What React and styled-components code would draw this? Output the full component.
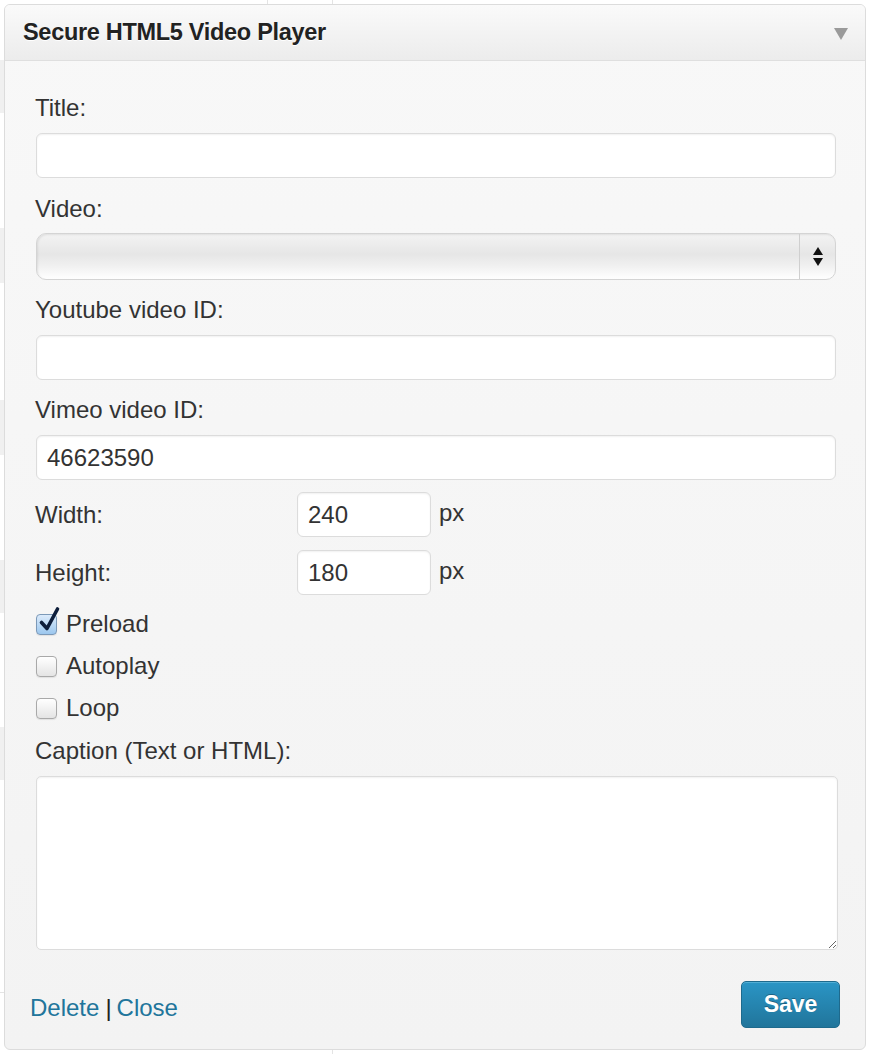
import React from "react";
import styled, { createGlobalStyle } from "styled-components";

const GlobalStyle = createGlobalStyle`
  html, body {
    margin: 0;
    padding: 0;
    background: #fff;
  }
  body {
    font-family: "Liberation Sans", Arial, Helvetica, sans-serif;
    color: #333;
  }
  * { box-sizing: border-box; }
`;

const Page = styled.div`
  width: 870px;
  height: 1054px;
  padding: 4px 4px 4px 4px;
  background-color: #fff;
  background-image:
    linear-gradient(#e4e4e4, #e4e4e4),
    linear-gradient(#e4e4e4, #e4e4e4),
    linear-gradient(#e4e4e4, #e4e4e4),
    linear-gradient(#f0f0f0, #f0f0f0),
    linear-gradient(#f0f0f0, #f0f0f0),
    linear-gradient(#f0f0f0, #f0f0f0),
    linear-gradient(#f0f0f0, #f0f0f0),
    linear-gradient(#f0f0f0, #f0f0f0),
    linear-gradient(#e4e4e4, #e4e4e4);
  background-repeat: no-repeat;
  background-size:
    1px 4px, 1px 4px, 1px 4px,
    4px 53px, 4px 55px, 4px 55px, 4px 53px, 4px 53px,
    4px 1px;
  background-position:
    267px 0, 332px 0, 332px 1050px,
    0 60px, 0 228px, 0 400px, 0 560px, 0 727px,
    0 992px;
`;

const Panel = styled.section`
  width: 862px;
  height: 1046px;
  border: 1px solid #dcdcdc;
  border-radius: 6px;
  background: linear-gradient(#f8f8f8, #f3f3f3);
  display: flex;
  flex-direction: column;
  overflow: hidden;
`;

const Header = styled.header`
  height: 56px;
  flex-shrink: 0;
  display: flex;
  align-items: center;
  justify-content: space-between;
  padding: 0 17px 0 18px;
  background: linear-gradient(#fafafa, #ececec);
  border-bottom: 1px solid #dfdfdf;
`;

const Title = styled.h3`
  margin: 0;
  font-size: 23.5px;
  font-weight: bold;
  color: #222;
  letter-spacing: -0.3px;
  text-shadow: 0 1px 0 #fff;
`;

const Toggle = styled.span`
  width: 0;
  height: 0;
  border-left: 7px solid transparent;
  border-right: 7px solid transparent;
  border-top: 12px solid #9a9a9a;
  margin-top: 2px;
`;

const Body = styled.div`
  flex: 1;
  display: flex;
  flex-direction: column;
  padding: 32px 29px 0 31px;
`;

const Label = styled.label`
  display: block;
  font-size: 24px;
  line-height: 29px;
  color: #333;
  margin: 0 0 ${(p) => (p.$gap != null ? p.$gap : 11)}px -1px;
`;

const CaptionLabel = styled(Label)`
  margin-top: 7px;
`;

const TextInput = styled.input`
  display: block;
  width: 100%;
  height: 45px;
  margin-bottom: ${(p) => (p.$after != null ? p.$after : 16)}px;
  padding: 0 10px;
  border: 1px solid #dcdcdc;
  border-radius: 6px;
  background: #fff;
  box-shadow: inset 0 1px 2px rgba(0, 0, 0, 0.06);
  font-family: inherit;
  font-size: 24px;
  color: #333;
  outline: none;
`;

const SelectBox = styled.div`
  height: 47px;
  margin-bottom: 15px;
  border: 1px solid #d4d4d4;
  border-radius: 10px;
  background: linear-gradient(#f3f3f3 0%, #e6e6e6 45%, #f0f0f0 70%, #ffffff 100%);
  box-shadow: inset 1px 1px 2px rgba(0, 0, 0, 0.08);
  display: flex;
  justify-content: flex-end;
`;

const SelectArrows = styled.div`
  width: 36px;
  border-left: 1px solid #cfcfcf;
  display: flex;
  flex-direction: column;
  align-items: center;
  justify-content: center;
  gap: 3px;
`;

const Tri = styled.span`
  width: 0;
  height: 0;
  border-left: 5px solid transparent;
  border-right: 5px solid transparent;
  ${(p) =>
    p.$up ? "border-bottom: 8px solid #111;" : "border-top: 8px solid #111;"}
`;

const SizeRow = styled.div`
  display: grid;
  grid-template-columns: 261px 134px auto;
  align-items: center;
  margin-bottom: ${(p) => p.$after}px;
`;

const SizeLabel = styled.span`
  font-size: 24px;
  margin-left: -1px;
  color: #333;
`;

const Unit = styled.span`
  font-size: 24px;
  color: #333;
  margin-left: 8px;
  margin-top: -4px;
`;

const CheckRow = styled.label`
  display: flex;
  align-items: center;
  height: 42px;
  gap: 9px;
  font-size: 24px;
  color: #333;
`;

const Box = styled.span`
  position: relative;
  width: 21px;
  height: 21px;
  flex-shrink: 0;
  border: 1px solid ${(p) => (p.$checked ? "#7c99b8" : "#a9a9a9")};
  border-radius: 4px;
  background: ${(p) =>
    p.$checked
      ? "linear-gradient(#dcebfb, #9cc7ee)"
      : "linear-gradient(#ffffff, #e4e4e4)"};
  box-shadow: 0 1px 1px rgba(0, 0, 0, 0.08);
`;

const Tick = styled.svg`
  position: absolute;
  left: 1px;
  top: -9px;
  width: 23px;
  height: 27px;
`;

const TextArea = styled.textarea`
  display: block;
  width: calc(100% + 2px);
  height: 174px;
  margin: 0;
  border: 1px solid #dcdcdc;
  border-radius: 5px;
  background: #fff;
  box-shadow: inset 0 1px 2px rgba(0, 0, 0, 0.06);
  font-family: inherit;
  font-size: 22px;
  outline: none;
`;

const Footer = styled.footer`
  display: flex;
  align-items: center;
  justify-content: space-between;
  padding: 0 25px 21px 25px;
`;

const Links = styled.div`
  font-size: 24px;
  margin-top: 7px;
  color: #333;
`;

const Link = styled.a`
  color: #21759b;
  text-decoration: none;
`;

const Sep = styled.span`
  color: #222;
  margin: 0 5px 0 6px;
`;

const SaveButton = styled.button`
  width: 99px;
  height: 47px;
  border: 1px solid #1e6a8d;
  border-radius: 5px;
  background: linear-gradient(#2a95c5, #21759b);
  box-shadow: inset 0 1px 0 rgba(120, 200, 230, 0.5);
  color: #fff;
  font-family: inherit;
  font-size: 23px;
  font-weight: bold;
  text-shadow: 0 -1px 0 rgba(0, 0, 0, 0.3);
  cursor: pointer;
`;

function Checkbox({ checked, children }) {
  return (
    <CheckRow>
      <Box $checked={checked}>
        {checked && (
          <Tick viewBox="0 0 23 27">
            <path
              d="M3.5 16.5 L9 22.5 L19.5 3"
              fill="none"
              stroke="#0d1d3a"
              strokeWidth="3.6"
              strokeLinecap="round"
              strokeLinejoin="round"
            />
          </Tick>
        )}
      </Box>
      {children}
    </CheckRow>
  );
}

export default function App() {
  return (
    <>
      <GlobalStyle />
      <Page>
        <Panel>
          <Header>
            <Title>Secure HTML5 Video Player</Title>
            <Toggle />
          </Header>
          <Body>
            <Label>Title:</Label>
            <TextInput defaultValue="" />

            <Label $gap={10}>Video:</Label>
            <SelectBox>
              <SelectArrows>
                <Tri $up />
                <Tri />
              </SelectArrows>
            </SelectBox>

            <Label>Youtube video ID:</Label>
            <TextInput defaultValue="" $after={15} />

            <Label>Vimeo video ID:</Label>
            <TextInput defaultValue="46623590" $after={12} />

            <SizeRow $after={13}>
              <SizeLabel>Width:</SizeLabel>
              <TextInput defaultValue="240" $after={0} />
              <Unit>px</Unit>
            </SizeRow>
            <SizeRow $after={8}>
              <SizeLabel>Height:</SizeLabel>
              <TextInput defaultValue="180" $after={0} />
              <Unit>px</Unit>
            </SizeRow>

            <Checkbox checked>Preload</Checkbox>
            <Checkbox>Autoplay</Checkbox>
            <Checkbox>Loop</Checkbox>

            <CaptionLabel $gap={11}>Caption (Text or HTML):</CaptionLabel>
            <TextArea />
          </Body>
          <Footer>
            <Links>
              <Link href="#delete">Delete</Link>
              <Sep>|</Sep>
              <Link href="#close">Close</Link>
            </Links>
            <SaveButton>Save</SaveButton>
          </Footer>
        </Panel>
      </Page>
    </>
  );
}
